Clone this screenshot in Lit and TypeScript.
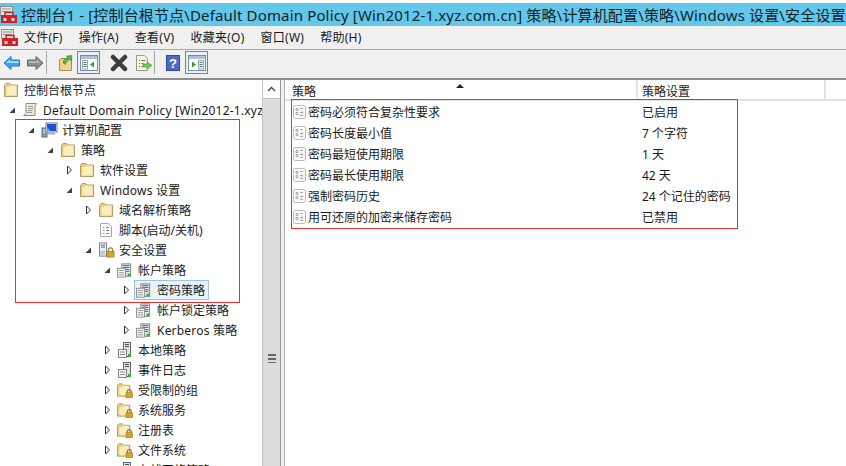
import { LitElement, html, css, svg } from "lit";
import { customElement } from "lit/decorators.js";

const folder = svg`<svg width="16" height="16" viewBox="0 0 16 16"><path d="M1.500 14.500V3.500L3 1.500h3.500L8 3h6.500v11.500z" fill="#e9cd84" stroke="#b59c60"/><path d="M3.500 13.500V5h2L7 3.500h6.500v10z" fill="#fbeebd"/></svg>`;
const lock = svg`<g><path d="M11 11V9.500a2 2 0 0 1 4 0V11" fill="none" stroke="#8a7a50" stroke-width="1.300"/><rect x="9.500" y="11" width="7" height="5" fill="#d9a520" stroke="#9a7410" stroke-width=".6"/></g>`;
const folderLock = svg`<svg width="18" height="16" viewBox="0 0 18 16"><path d="M.5 14.500V3L2 1.500h3.500L7 3h6.500v11.500z" fill="#e9cd84" stroke="#b59c60"/><path d="M2.500 13.500V5h2L6 3.500h6.500v10z" fill="#fbeebd"/>${lock}</svg>`;
const scroll = svg`<svg width="16" height="16" viewBox="0 0 16 16"><path d="M4 1.500h10.500L13 4v9.500H1.500c1.500-1 2-1.500 2.500-3z" fill="#f2ecd8" stroke="#8c8c80"/><path d="M6 4.500h5M6 6.500h5M5.500 8.500h5M5 10.500h5" stroke="#9b9b8c"/></svg>`;
const computer = svg`<svg width="17" height="16" viewBox="0 0 17 16"><rect x="1" y="6" width="5" height="9" fill="#8a9bb0" stroke="#5a6a80"/><path d="M2 8h3M2 10h3" stroke="#dfe6ee"/><rect x="5" y="1" width="11" height="9" fill="#fff" stroke="#68768c"/><rect x="6" y="2" width="9" height="7" fill="#1c4fd0"/><path d="M6 9V5l4 4z" fill="#3f9be8"/><rect x="7" y="10.500" width="7" height="2" fill="#a7b2c0"/></svg>`;
const script = svg`<svg width="16" height="16" viewBox="0 0 16 16"><path d="M2.500 1.500h8l3 3v10h-11z" fill="#fbfbfb" stroke="#a8a8a8"/><path d="M5 5.500h1.500M8 5.500h3M5 8.500h1.500M8 8.500h3M5 11.500h1.500M8 11.500h3" stroke="#8c9096"/></svg>`;
const secure = svg`<svg width="18" height="18" viewBox="0 0 18 18"><rect x="1.500" y="1.500" width="7.500" height="14" fill="#e8ecef" stroke="#7c8288"/><path d="M3 4h4.500M3 6h4.500" stroke="#6a7076"/><rect x="2.500" y="10" width="5" height="4" fill="#c0c6cb"/><path d="M11 10.500V9a2.200 2.200 0 0 1 4.400 0v1.500" fill="none" stroke="#8a7a50" stroke-width="1.300"/><rect x="9.500" y="10.500" width="7.500" height="6" fill="#d9a520" stroke="#9a7410" stroke-width=".7"/></svg>`;
const policy = svg`<svg width="15" height="15" viewBox="0 0 17 16"><rect x="5.500" y=".5" width="10" height="14" fill="#e6e9eb" stroke="#6f757a"/><path d="M7 2.500h7M7 4.500h7M10 7h4M10 9h4" stroke="#50565c"/><rect x=".5" y="5.500" width="9" height="10" fill="#f6f6f6" stroke="#80868b"/><path d="M2 8h6M2 10.500h6M2 13h6" stroke="#8b9196"/><rect x="12" y="11.500" width="3" height="3" fill="#2fb52f"/></svg>`;
const local = svg`<svg width="16" height="17" viewBox="0 0 16 17"><rect x="6.500" y=".5" width="7" height="14" fill="#dfe3e6" stroke="#60666c"/><path d="M8 2.500h4M8 4.500h4" stroke="#4a5056"/><rect x="1.500" y="7.500" width="8" height="8" fill="#f3f4f4" stroke="#80868b"/><path d="M3 10h5M3 12.500h5" stroke="#8b9196"/><rect x="11" y="12" width="3" height="3" fill="#2fb52f"/></svg>`;
const item = svg`<svg width="15" height="16" viewBox="0 0 15 16"><path d="M1.500 2.500L3 1.500h9l1.500 1v11l-1.500 1H3l-1.500-1z" fill="#fafafa" stroke="#bdbdbd"/><path d="M4 4.500h2v2H4zM8 4.500h3M4 8.500h2v2H4zM8 8.500h3M8 11.500h3" fill="none" stroke="#a6aab2"/><path d="M9 6.500l2 2-2 2" fill="none" stroke="#c4c4cc"/></svg>`;

const appIcon = svg`<svg width="18" height="18" viewBox="0 0 18 18"><rect x=".5" y=".5" width="12" height="9" fill="#e8e8e8" stroke="#8f8f8f"/><path d="M2 3h9M2 5.500h9" stroke="#8f8f8f"/><path d="M1 9h16v8H1z" fill="#c8242b"/><path d="M5 9V6.500h8V9" fill="none" stroke="#c8242b" stroke-width="1.500"/><rect x="3.500" y="12" width="3" height="3" fill="#f4d0c8"/><rect x="11.500" y="12" width="3" height="3" fill="#f4d0c8"/></svg>`;

const icons = { folder, folderLock, scroll, computer, script, secure, policy, local };

type Row = { d: number; t: string; i: keyof typeof icons; e?: "open" | "closed"; sel?: boolean; lat?: boolean };
const rows: Row[] = [
  { d: 0, t: "控制台根节点", i: "folder" },
  { d: 1, t: "Default Domain Policy [Win2012-1.xyz.com.cn] 策略", i: "scroll", e: "open", lat: true },
  { d: 2, t: "计算机配置", i: "computer", e: "open" },
  { d: 3, t: "策略", i: "folder", e: "open" },
  { d: 4, t: "软件设置", i: "folder", e: "closed" },
  { d: 4, t: "Windows 设置", i: "folder", e: "open", lat: true },
  { d: 5, t: "域名解析策略", i: "folder", e: "closed" },
  { d: 5, t: "脚本(启动/关机)", i: "script" },
  { d: 5, t: "安全设置", i: "secure", e: "open" },
  { d: 6, t: "帐户策略", i: "policy", e: "open" },
  { d: 7, t: "密码策略", i: "policy", e: "closed", sel: true },
  { d: 7, t: "帐户锁定策略", i: "policy", e: "closed" },
  { d: 7, t: "Kerberos 策略", i: "policy", e: "closed", lat: true },
  { d: 6, t: "本地策略", i: "local", e: "closed" },
  { d: 6, t: "事件日志", i: "local", e: "closed" },
  { d: 6, t: "受限制的组", i: "folderLock", e: "closed" },
  { d: 6, t: "系统服务", i: "folderLock", e: "closed" },
  { d: 6, t: "注册表", i: "folderLock", e: "closed" },
  { d: 6, t: "文件系统", i: "folderLock", e: "closed" },
  { d: 6, t: "有线网络策略", i: "local", e: "closed" },
];

const policies = [
  ["密码必须符合复杂性要求", "已启用"],
  ["密码长度最小值", "7 个字符"],
  ["密码最短使用期限", "1 天"],
  ["密码最长使用期限", "42 天"],
  ["强制密码历史", "24 个记住的密码"],
  ["用可还原的加密来储存密码", "已禁用"],
];

const menus = ["文件(F)", "操作(A)", "查看(V)", "收藏夹(O)", "窗口(W)", "帮助(H)"];

@customElement("app-root")
export class AppRoot extends LitElement {
  static styles = css`
    :host {
      display: block;
      height: 466px;
      overflow: hidden;
      background: #fff;
      font-family: "Noto Sans", "Noto Sans CJK SC", sans-serif;
      font-size: 12px;
      color: #1a1a1a;
    }
    .app { display: flex; flex-direction: column; height: 466px; overflow: hidden; }
    .title {
      margin-top: 3px; height: 23px; flex: none; background: #63c7ea;
      display: flex; align-items: center; gap: 3px;
      white-space: nowrap; overflow: hidden; font-size: 15px; letter-spacing: .15px; color: #10222a;
    }
    .title svg, .menu svg { flex: none; }
    .menu {
      height: 23px; flex: none; background: #f0f0f0; border-bottom: 1px solid #a9a9a9;
      display: flex; align-items: center; padding-left: 1px; letter-spacing: .25px;
    }
    .menu span { margin-left: 5px; margin-right: 11px; line-height: 23px; }
    .tools {
      flex: none; background: #f0f0f0; border-bottom: 2px solid #8e8e8e;
      display: flex; align-items: flex-start; padding-top: 1px; box-sizing: border-box; height: 30px;
    }
    .tool { width: 23px; height: 23px; display: flex; align-items: center; justify-content: center; flex: none; box-sizing: border-box; }
    .tool.on { border: 1px solid #2f9ad6; background: #e3f1fa; }
    .ml1 { margin-left: 1px; }
    .ml6 { margin-left: 6px; }
    .ml7 { margin-left: 7px; }
    .sep { width: 1px; height: 23px; background: #a8a8a8; flex: none; }
    .main { flex: 1; min-height: 0; display: flex; background: #f0f0f0; position: relative; }
    .left { width: 280px; flex: none; display: flex; background: #fff; border-right: 1px solid #9a9a9a; }
    .tree { width: 262px; flex: none; overflow: hidden; }
    .row { height: 20px; display: flex; align-items: center; white-space: nowrap; }
    .exp { width: 8px; height: 10px; flex: none; display: flex; align-items: center; justify-content: center; margin-right: 4px; }
    .entry { display: flex; align-items: center; height: 18px; padding: 0 3px 0 1px; border: 1px solid transparent; flex: none; }
    .entry.sel { background: #eaf3fb; border-color: #9dbfe3; }
    .ic { width: 17px; height: 18px; flex: none; display: flex; align-items: center; justify-content: flex-start; margin-right: 4px; }
    .lat { letter-spacing: .2px; }
    .scroll { width: 18px; flex: none; display: flex; flex-direction: column; background: #dcdcdc; border-left: 1px solid #c4c4c4; box-sizing: border-box; }
    .up { height: 18px; flex: none; background: #fff; display: flex; align-items: center; justify-content: center; border-bottom: 1px solid #bdbdbd; }
    .thumb { flex: 1; display: flex; align-items: center; justify-content: center; padding-top: 152px; }
    .grip { width: 8px; height: 9px; background: repeating-linear-gradient(#666 0 2px, transparent 2px 4px); }
    .split { width: 3px; flex: none; background: #f0f0f0; }
    .right { flex: 1; min-width: 0; background: #fff; border-left: 1px solid #b0b0b0; overflow: hidden; }
    .head { display: flex; height: 21px; border-bottom: 2px solid #e3e3e3; box-sizing: border-box; }
    .h1 { width: 353px; flex: none; padding-left: 7px; position: relative; border-right: 2px solid #e3e3e3; line-height: 23px; box-sizing: border-box; }
    .h2 { width: 188px; flex: none; padding-left: 4px; border-right: 2px solid #e3e3e3; line-height: 23px; box-sizing: border-box; }
    .sort { position: absolute; left: 171px; top: 4px; width: 0; height: 0; border-left: 4px solid transparent; border-right: 4px solid transparent; border-bottom: 4px solid #222; }
    .prow { height: 21px; display: flex; align-items: center; white-space: nowrap; }
    .pname { width: 351px; flex: none; display: flex; align-items: center; gap: 1px; padding-left: 7px; box-sizing: border-box; }
    .pval { padding-left: 6px; }
    .mark { position: absolute; border: 1px solid #ec2f35; box-sizing: border-box; pointer-events: none; }
    .m1 { left: 15px; top: 39px; width: 225px; height: 184px; }
    .m2 { left: 291px; top: 19px; width: 447px; height: 130px; }
  `;

  private expander(e?: "open" | "closed") {
    if (e === "open")
      return html`<svg width="8" height="8" viewBox="0 0 8 8"><path d="M7 1.500V7H1.500z" fill="#404040"/></svg>`;
    if (e === "closed")
      return html`<svg width="7" height="10" viewBox="0 0 7 10"><path d="M1.500 1l4 4-4 4z" fill="#fff" stroke="#333"/></svg>`;
    return null;
  }

  render() {
    return html`<div class="app">
      <div class="title">${appIcon}<span>控制台1 - [控制台根节点\\Default Domain Policy [Win2012-1.xyz.com.cn] 策略\\计算机配置\\策略\\Windows 设置\\安全设置\\帐户策略\\密码策略]</span></div>
      <div class="menu">${appIcon}${menus.map((m) => html`<span>${m}</span>`)}</div>
      <div class="tools">
        <div class="tool"><svg width="18" height="16" viewBox="0 0 18 16"><path d="M1 8l7-6.500V5h8.500v6H8v3.500z" fill="#3fa6ee" stroke="#1c76c4"/><path d="M3 8l4-3.500V6h8.500v2z" fill="#a6dcfb"/></svg></div>
        <div class="tool"><svg width="18" height="16" viewBox="0 0 18 16"><path d="M17 8l-7-6.500V5H1.500v6H10v3.500z" fill="#8d8d8d" stroke="#666"/><path d="M3 6h8V4.500L14 8H3z" fill="#b5b5b5"/></svg></div>
        <div class="sep"></div>
        <div class="tool ml7"><svg width="16" height="18" viewBox="0 0 16 18"><path d="M1.500 16.500V6L3 4.500h10.500v12z" fill="#eed48c" stroke="#a58f50"/><path d="M5 9c0-3 2-4.500 4.500-5L8.500 2 14 1.500 13.500 7 11.500 5.500C9.500 6.500 8 8 7.500 10.500z" fill="#57b04a" stroke="#3a8a30" stroke-width=".6"/></svg></div>
        <div class="tool on"><svg width="18" height="16" viewBox="0 0 18 16"><rect x=".5" y=".5" width="17" height="15" fill="#fff" stroke="#7f8a90"/><rect x="1" y="1" width="16" height="3" fill="#b6c0c6"/><rect x="2.500" y="5.500" width="5" height="8.500" fill="#f4f6f7" stroke="#9aa5ab"/><path d="M3.500 7.500h3M3.500 9.500h3M3.500 11.500h3" stroke="#3a78a8"/><path d="M14 6.500v6l-4-3z" fill="#2ea12e"/></svg></div>
        <div class="tool ml7"><svg width="18" height="18" viewBox="0 0 18 18"><path d="M3 3l12 12M15 3L3 15" stroke="#3c3c3c" stroke-width="4.500" stroke-linecap="round"/></svg></div>
        <div class="tool ml1"><svg width="18" height="18" viewBox="0 0 18 18"><path d="M2.500 1.500h8l3 3v12h-11z" fill="#f8f5e8" stroke="#a09a80"/><path d="M5 6.500h1M7.500 6.500h4M5 9.500h1M7.500 9.500h2M5 12.500h1M7.500 12.500h2" stroke="#707070"/><path d="M9 10h4V8l5 3.500-5 3.500v-2H9z" fill="#6cc84a" stroke="#3f9a2b" stroke-width=".6"/></svg></div>
        <div class="sep"></div>
        <div class="tool ml6"><svg width="14" height="16" viewBox="0 0 14 16"><rect width="14" height="16" fill="#2f479f"/><rect x="1" y="1" width="12" height="14" fill="#5069c4"/><text x="7" y="13" text-anchor="middle" font-size="13" font-weight="700" fill="#fff" font-family="Liberation Sans">?</text></svg></div>
        <div class="tool on ml1"><svg width="18" height="16" viewBox="0 0 18 16"><rect x=".5" y=".5" width="17" height="15" fill="#fff" stroke="#7f8a90"/><rect x="1" y="1" width="16" height="3" fill="#b6c0c6"/><rect x="10.500" y="5.500" width="5" height="8.500" fill="#f4f6f7" stroke="#9aa5ab"/><path d="M11.500 7.500h3M11.500 9.500h3M11.500 11.500h3" stroke="#3a78a8"/><path d="M4 6.500v6l4-3z" fill="#2ea12e"/></svg></div>
      </div>
      <div class="main">
        <div class="left">
          <div class="tree">
            ${rows.map((r) => html`<div class="row" style="padding-left:${r.d === 0 ? 1 : 19 * r.d - 11}px">
              ${r.d === 0 ? null : html`<span class="exp">${this.expander(r.e)}</span>`}
              <span class="entry ${r.sel ? "sel" : ""}">
                <span class="ic">${icons[r.i]}</span>
                <span class=${r.lat ? "lat" : ""}>${r.t}</span>
              </span>
            </div>`)}
          </div>
          <div class="scroll">
            <div class="up"><svg width="9" height="6" viewBox="0 0 9 6"><path d="M1 5l3.500-3.500L8 5" fill="none" stroke="#444" stroke-width="1.300"/></svg></div>
            <div class="thumb"><div class="grip"></div></div>
          </div>
        </div>
        <div class="split"></div>
        <div class="right">
          <div class="head">
            <div class="h1">策略<span class="sort"></span></div>
            <div class="h2">策略设置</div>
          </div>
          <div>
            ${policies.map((p) => html`<div class="prow"><div class="pname">${item}<span>${p[0]}</span></div><div class="pval">${p[1]}</div></div>`)}
          </div>
        </div>
        <div class="mark m1"></div>
        <div class="mark m2"></div>
      </div>
    </div>`;
  }
}
